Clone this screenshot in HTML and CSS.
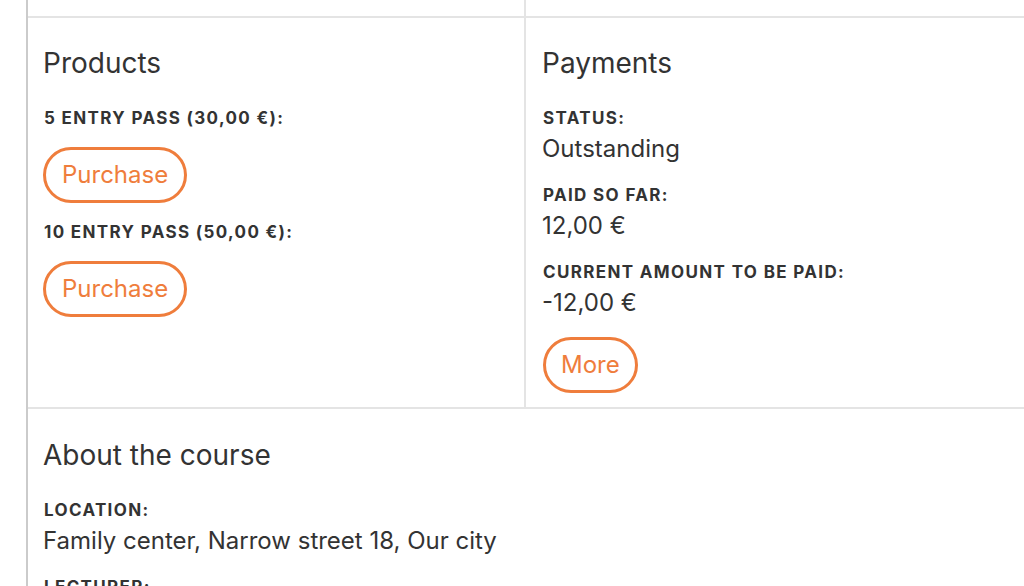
FILE: index.html
```html
<!DOCTYPE html>
<html>
<head>
<meta charset="utf-8">
<link rel="stylesheet" href="styles.css">
</head>
<body>
<div class="page">
  <div class="grid">
    <div class="cell top left"></div>
    <div class="cell top"></div>
    <section class="cell left">
      <h2 class="title">Products</h2>
      <div class="label">5 Entry pass (30,00 €):</div>
      <button class="btn">Purchase</button>
      <div class="label">10 Entry pass (50,00 €):</div>
      <button class="btn">Purchase</button>
    </section>
    <section class="cell right">
      <h2 class="title">Payments</h2>
      <div class="label">Status:</div>
      <div class="value">Outstanding</div>
      <div class="label">Paid so far:</div>
      <div class="value">12,00 €</div>
      <div class="label">Current amount to be paid:</div>
      <div class="value">-12,00 €</div>
      <button class="btn btn-more">More</button>
    </section>
    <section class="cell wide">
      <h2 class="title">About the course</h2>
      <div class="label">Location:</div>
      <div class="value">Family center, Narrow street 18, Our city</div>
      <div class="label">Lecturer:</div>
      <div class="value">Jane Doe</div>
    </section>
  </div>
</div>
</body>
</html>
```

FILE: styles.css
```css
html, body {
  margin: 0;
  padding: 0;
  background: #fff;
}
body {
  font-family: Inter, "Noto Sans", sans-serif;
  color: #333;
  overflow: hidden;
  height: 586px;
}
.page {
  margin-left: 26px;
  border-left: 2px solid #cbcbcb;
  min-height: 586px;
}
.grid {
  display: grid;
  grid-template-columns: 1fr 1fr;
}
.cell {
  border-bottom: 2px solid #e4e4e4;
  padding: 28px 16px 16px 15px;
  display: flex;
  flex-direction: column;
  align-items: flex-start;
}
.cell.top {
  height: 16px;
  padding: 0;
}
.cell.left {
  border-right: 2px solid #e4e4e4;
  padding-right: 15px;
}
.cell.right {
  padding-left: 16px;
  padding-bottom: 14px;
}
.cell.wide {
  grid-column: 1 / span 2;
  border-bottom: none;
  padding-top: 29px;
}
.title {
  margin: 0 0 27px 0;
  font-size: 28px;
  line-height: 34px;
  font-weight: 400;
  color: #333;
}
.label {
  margin-left: 1px;
  font-size: 17px;
  line-height: 22px;
  font-weight: 700;
  text-transform: uppercase;
  letter-spacing: 1.35px;
  color: #333;
}
.value {
  margin-top: 5px;
  margin-bottom: 20px;
  font-size: 24px;
  line-height: 30px;
  color: #333;
}
.btn {
  font-family: inherit;
  margin: 18px 0;
  height: 56px;
  padding: 0 16px;
  border: 3px solid #ef7d3c;
  border-radius: 28px;
  background: #fff;
  color: #ef7d3c;
  font-size: 24px;
  line-height: 1;
}
.btn:last-child {
  margin-bottom: 0;
}
.btn-more {
  margin-top: -1px;
  margin-left: 1px;
  height: 56px;
  padding: 0 15px;
}
```
